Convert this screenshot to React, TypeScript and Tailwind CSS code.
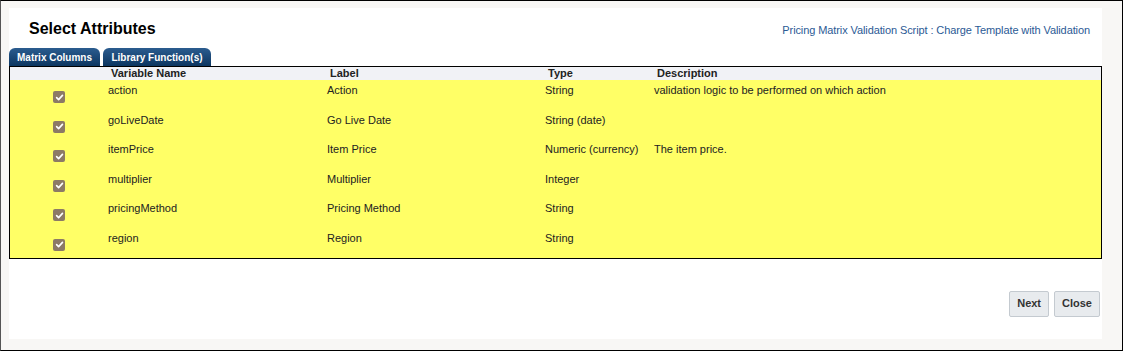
import React from 'react';

const rows = [
  { name: 'action', label: 'Action', type: 'String', desc: 'validation logic to be performed on which action' },
  { name: 'goLiveDate', label: 'Go Live Date', type: 'String (date)', desc: '' },
  { name: 'itemPrice', label: 'Item Price', type: 'Numeric (currency)', desc: 'The item price.' },
  { name: 'multiplier', label: 'Multiplier', type: 'Integer', desc: '' },
  { name: 'pricingMethod', label: 'Pricing Method', type: 'String', desc: '' },
  { name: 'region', label: 'Region', type: 'String', desc: '' },
];

function Check() {
  return (
    <span className="inline-flex w-[12px] h-[12px] rounded-[2px] bg-[#8c7a66] items-center justify-center">
      <svg width="9" height="9" viewBox="0 0 10 10">
        <path d="M1.8 5.2 L4 7.4 L8.3 2.6" stroke="#fff" strokeWidth="1.8" fill="none" strokeLinecap="round" strokeLinejoin="round" />
      </svg>
    </span>
  );
}

export default function App() {
  return (
    <div className="w-[1123px] h-[351px] border border-black border-l-[#555] bg-[#f8f7f5] pt-[7px] pl-[8px] font-['Liberation_Sans',Arial,sans-serif]">
      <div className="w-[1093px] h-[331px] bg-white flex flex-col">
        {/* Header */}
        <div className="flex items-center justify-between h-[40px] pl-[20px] pr-[12px]">
          <h1 className="text-[16px] font-bold text-black mt-[1px]">Select Attributes</h1>
          <span className="text-[11px] tracking-[-0.1px] text-[#2b5a95] mt-[4px]">Pricing Matrix Validation Script : Charge Template with Validation</span>
        </div>

        {/* Tabs */}
        <div className="flex gap-[3px] h-[18px]">
          <div className="w-[91px] rounded-t-[6px] bg-gradient-to-b from-[#2b5c8f] to-[#0c3661] text-white text-[10px] font-bold flex items-center justify-center">
            Matrix Columns
          </div>
          <div className="w-[108px] rounded-t-[6px] bg-gradient-to-b from-[#2b5c8f] to-[#0c3661] text-white text-[10px] font-bold flex items-center justify-center">
            Library Function(s)
          </div>
        </div>

        {/* Table */}
        <div className="border border-black">
          <table className="w-full border-collapse text-[11px] text-[#222]">
            <thead>
              <tr className="bg-[#f1f2f6] h-[13px] leading-[13px] font-bold text-left">
                <th className="w-[98px] p-0"></th>
                <th className="w-[219px] p-0 pl-[3px]">Variable Name</th>
                <th className="w-[218px] p-0 pl-[3px]">Label</th>
                <th className="w-[109px] p-0 pl-[3px]">Type</th>
                <th className="p-0 pl-[3px]">Description</th>
              </tr>
            </thead>
            <tbody className="bg-[#ffff66]">
              {rows.map((r) => (
                <tr key={r.name} className="h-[29.6px] align-top">
                  <td className="p-0 pt-[11px] text-center leading-none"><Check /></td>
                  <td className="p-0 pt-[2px]">{r.name}</td>
                  <td className="p-0 pt-[2px]">{r.label}</td>
                  <td className="p-0 pt-[2px]">{r.type}</td>
                  <td className="p-0 pt-[2px]">{r.desc}</td>
                </tr>
              ))}
            </tbody>
          </table>
        </div>

        {/* Buttons */}
        <div className="flex justify-end gap-[5px] mt-[32px] pr-[2px]">
          <button className="h-[26px] px-[7px] bg-[#e8ebee] border border-[#c4cad0] rounded-[2px] text-[11px] font-bold text-[#333]">Next</button>
          <button className="h-[26px] px-[7px] bg-[#e8ebee] border border-[#c4cad0] rounded-[2px] text-[11px] font-bold text-[#333]">Close</button>
        </div>
      </div>
    </div>
  );
}
